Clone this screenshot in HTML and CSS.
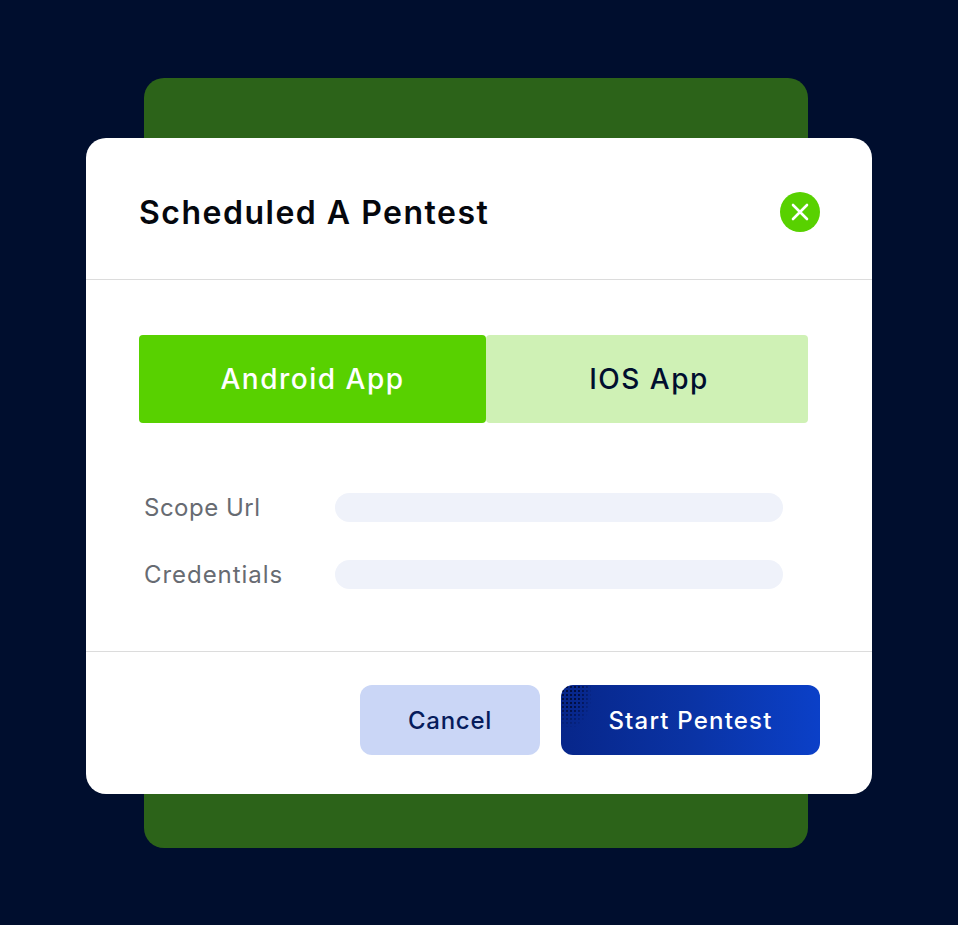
FILE: index.html
```html
<!DOCTYPE html>
<html lang="en">
<head>
<meta charset="utf-8">
<title>Scheduled A Pentest</title>
<link rel="stylesheet" href="styles.css">
</head>
<body>
<main class="stage">
  <div class="backdrop"></div>
  <section class="modal">
    <header class="modal-head">
      <h1 class="title">Scheduled A Pentest</h1>
      <button class="close" type="button" aria-label="Close">
        <svg viewBox="0 0 40 40" width="40" height="40" aria-hidden="true"><path d="M13 13 L27 27 M27 13 L13 27" fill="none" stroke="#fff" stroke-width="2.6" stroke-linecap="round"/></svg>
      </button>
    </header>
    <div class="modal-body">
      <div class="tabs">
        <div class="tab tab-active">Android App</div>
        <div class="tab tab-idle">IOS App</div>
      </div>
      <div class="fields">
        <div class="field"><span class="label">Scope Url</span><span class="input"></span></div>
        <div class="field"><span class="label label-wide">Credentials</span><span class="input"></span></div>
      </div>
    </div>
    <footer class="modal-foot">
      <button class="btn btn-cancel" type="button">Cancel</button>
      <button class="btn btn-start" type="button"><span class="dots"></span><span class="btn-text">Start Pentest</span></button>
    </footer>
  </section>
</main>
</body>
</html>
```
FILE: styles.css
```css
* { box-sizing: border-box; }
html, body { margin: 0; padding: 0; }
body {
  background: #000e2e;
  font-family: "Inter", "Open Sans", "Liberation Sans", sans-serif;
}
.stage {
  display: grid;
  width: 958px;
  height: 925px;
  overflow: hidden;
}
.backdrop, .modal { grid-area: 1 / 1; }
.backdrop {
  width: 664px;
  height: 770px;
  margin: 78px 0 0 144px;
  background: #2c6319;
  border-radius: 20px;
}
.modal {
  width: 786px;
  height: 656px;
  margin: 138px 0 0 86px;
  background: #fff;
  border-radius: 20px;
  display: flex;
  flex-direction: column;
}
.modal-head {
  height: 142px;
  flex: none;
  display: flex;
  align-items: center;
  justify-content: space-between;
  padding: 6px 52px 0 53px;
  border-bottom: 1px solid #dcdcdc;
}
.title {
  margin: 3px 0 0;
  font-size: 32px;
  font-weight: 600;
  letter-spacing: 1.5px;
  color: #05070d;
  line-height: 40px;
}
.close {
  width: 40px;
  height: 40px;
  padding: 0;
  border: 0;
  border-radius: 50%;
  background: #58d100;
  display: block;
}
.close svg { display: block; }
.modal-body {
  height: 372px;
  flex: none;
  padding: 55px 64px 0 53px;
  border-bottom: 1px solid #dcdcdc;
}
.tabs {
  display: flex;
  height: 88px;
}
.tab {
  display: flex;
  align-items: center;
  justify-content: center;
  font-size: 28px;
  font-weight: 500;
  letter-spacing: 1.5px;
  border-radius: 4px;
}
.tab-active { width: 347px; background: #58d100; color: #fff; position: relative; z-index: 1; }
.tab-idle { width: 322px; padding-left: 4px; background: #cff1b5; color: #000e2e; }
.fields {
  display: flex;
  flex-direction: column;
  gap: 38px;
  margin-top: 70px;
  padding-left: 5px;
}
.field {
  display: flex;
  align-items: center;
  height: 29px;
}
.label {
  width: 191px;
  font-size: 24px;
  color: #676b72;
  letter-spacing: 0.5px;
  flex: none;
}
.label-wide { letter-spacing: 0.95px; }
.input {
  width: 448px;
  height: 29px;
  background: #eff2fa;
  border-radius: 15px;
}
.modal-foot {
  display: flex;
  justify-content: flex-end;
  gap: 21px;
  padding: 33px 52px 0 0;
}
.btn {
  height: 70px;
  border: 0;
  padding: 0;
  border-radius: 12px;
  font-family: inherit;
  font-size: 24px;
  font-weight: 500;
  letter-spacing: 0.75px;
}
.btn-cancel { width: 180px; background: #cad6f6; color: #061c5c; }
.btn-start {
  width: 259px;
  color: #fff;
  letter-spacing: 1.2px;
  background: linear-gradient(90deg, #07268a 0%, #0a33a4 50%, #0b40c8 100%);
  position: relative;
  overflow: hidden;
}
.btn-text { position: relative; }
.dots {
  position: absolute;
  left: 0;
  top: 0;
  width: 30px;
  height: 42px;
  background-image: radial-gradient(circle, rgba(0, 8, 45, 0.8) 0.7px, transparent 1px);
  background-size: 4px 4px;
  -webkit-mask-image: radial-gradient(ellipse at 30% 20%, #000 30%, transparent 75%);
  mask-image: radial-gradient(ellipse at 30% 20%, #000 30%, transparent 75%);
}
```
